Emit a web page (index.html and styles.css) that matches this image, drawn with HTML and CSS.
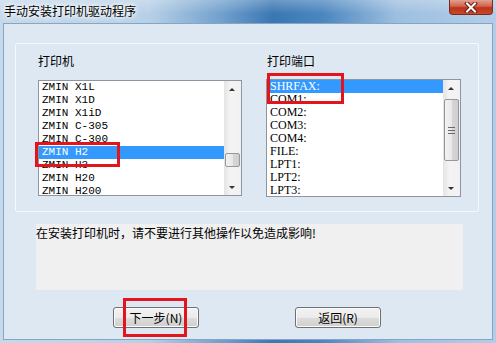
FILE: index.html
```html
<!DOCTYPE html>
<html lang="zh-CN">
<head>
  <meta charset="UTF-8" />
  <title>手动安装打印机驱动程序</title>
  <link rel="stylesheet" href="styles.css">
</head>
<body>
  <div class="window">
    <div class="titlebar">
      <span class="title">手动安装打印机驱动程序</span>
      <div class="close-btn">
        <svg width="14" height="11" viewBox="0 0 14 11">
          <path d="M3 1.5 L11 9.5 M11 1.5 L3 9.5" stroke="#6b1d12" stroke-width="4" stroke-linecap="square" />
          <path d="M3 1.5 L11 9.5 M11 1.5 L3 9.5" stroke="#fff" stroke-width="2" stroke-linecap="square" />
        </svg>
      </div>
    </div>

    <div class="client">
      <div class="groupbox">
        <div class="col col-printer">
          <div class="label">打印机</div>
          <div class="listbox">
            <ul class="items mono">
              <li>ZMIN X1L</li>
              <li>ZMIN X1D</li>
              <li>ZMIN X1iD</li>
              <li>ZMIN C-305</li>
              <li>ZMIN C-300</li>
              <li class="selected">ZMIN H2</li>
              <li>ZMIN H3</li>
              <li>ZMIN H20</li>
              <li>ZMIN H200</li>
            </ul>
            <div class="scrollbar">
              <div class="arrow up"></div>
              <div class="track">
                <div class="thumb thumb-small"></div>
              </div>
              <div class="arrow down"></div>
            </div>
          </div>
        </div>

        <div class="col col-port">
          <div class="label">打印端口</div>
          <div class="listbox">
            <ul class="items serif">
              <li class="selected">SHRFAX:</li>
              <li>COM1:</li>
              <li>COM2:</li>
              <li>COM3:</li>
              <li>COM4:</li>
              <li>FILE:</li>
              <li>LPT1:</li>
              <li>LPT2:</li>
              <li>LPT3:</li>
            </ul>
            <div class="scrollbar">
              <div class="arrow up"></div>
              <div class="track">
                <div class="thumb thumb-long">
                  <span class="grip"></span>
                </div>
              </div>
              <div class="arrow down"></div>
            </div>
          </div>
        </div>
      </div>

      <div class="message">在安装打印机时，请不要进行其他操作以免造成影响!</div>

      <div class="buttons">
        <button class="btn">下一步(N)</button>
        <button class="btn">返回(R)</button>
      </div>
    </div>

    <!-- red annotation boxes -->
    <div class="mark mark-printer"></div>
    <div class="mark mark-port"></div>
    <div class="mark mark-next"></div>
  </div>
</body>
</html>
```

FILE: styles.css
```css
body {
  margin: 0;
  padding: 0;
  font-family: "Noto Sans CJK SC", "Liberation Sans", sans-serif;
  font-size: 12px;
  color: #000;
  background: #a9c8e6;
}

.window {
  position: relative;
  width: 496px;
  height: 343px;
  box-sizing: border-box;
  background: linear-gradient(90deg, #c6d9eb 0%, #b8d0e7 30%, #6f9fcd 45%, #3a77b2 55%, #4b86bf 65%, #9dbfe0 80%, #b3cde7 100%);
  overflow: hidden;
}

.titlebar {
  height: 23px;
  display: flex;
  align-items: center;
  justify-content: space-between;
  padding-left: 4px;
  background: linear-gradient(180deg, rgba(255, 255, 255, 0.25) 0%, rgba(255, 255, 255, 0) 60%);
}

.title {
  line-height: 14px;
  font-size: 12px;
  text-shadow: 0 0 4px #fff, 0 0 6px #fff, 0 0 8px rgba(255, 255, 255, 0.8);
  margin-top: -2px;
}

.close-btn {
  align-self: flex-start;
  width: 44px;
  height: 15px;
  margin-right: 3px;
  box-sizing: border-box;
  border: 1px solid #7a2a1e;
  border-top: none;
  border-radius: 0 0 4px 4px;
  background: linear-gradient(180deg, #e3a08f 0%, #d0624b 45%, #bd3219 55%, #c9492c 100%);
  display: flex;
  align-items: center;
  justify-content: center;
}

.client {
  margin: 0 3px;
  height: 317px;
  box-sizing: border-box;
  border: 1px solid #85a5c5;
  background: #dde8f3;
  padding-top: 19px;
}

.groupbox {
  margin-left: 11px;
  width: 464px;
  height: 169px;
  box-sizing: border-box;
  border: 1px solid #f5f9fd;
  border-radius: 2px;
  padding: 10px 0 0 22px;
  display: flex;
  gap: 24px;
}

.label {
  line-height: 14px;
  height: 14px;
  margin-bottom: 12px;
}

.col-port .label {
  margin-bottom: 11px;
  padding-left: 1px;
}

.listbox {
  display: flex;
  height: 116px;
  box-sizing: border-box;
  border: 1px solid #8e959e;
  background: #fff;
  overflow: hidden;
}

.col-printer .listbox {
  width: 204px;
}

.col-port .listbox {
  width: 195px;
  height: 118px;
}

.items {
  list-style: none;
  margin: 0;
  padding: 0;
  flex: 1;
  overflow: hidden;
}

.items li {
  height: 13px;
  line-height: 13px;
  padding-left: 3px;
  white-space: nowrap;
}

.mono {
  font-family: "Liberation Mono", monospace;
  font-size: 11px;
}

.serif {
  font-family: "Liberation Serif", serif;
  font-size: 12px;
}

.items li.selected {
  background: #3399ff;
  color: #fff;
}

.scrollbar {
  width: 17px;
  display: flex;
  flex-direction: column;
  background: linear-gradient(90deg, #e4e4e4 0%, #f4f4f4 40%, #f1f1f1 100%);
}

.arrow {
  height: 17px;
  position: relative;
}

.arrow::after {
  content: "";
  position: absolute;
  left: 5px;
  width: 0;
  height: 0;
  border-left: 3px solid transparent;
  border-right: 3px solid transparent;
}

.arrow.up::after {
  top: 7px;
  border-bottom: 3px solid #333;
}

.arrow.down::after {
  top: 8px;
  border-top: 3px solid #333;
}

.track {
  flex: 1;
  padding: 0 1px;
}

.thumb {
  box-sizing: border-box;
  border: 1px solid #979797;
  border-radius: 2px;
  background: linear-gradient(90deg, #f3f3f3 0%, #e8e8e8 50%, #d6d6d6 55%, #cfcfcf 100%);
  display: flex;
  align-items: center;
  justify-content: center;
}

.thumb-small {
  margin-top: 55px;
  height: 14px;
}

.thumb-long {
  margin-top: 2px;
  height: 62px;
}

.grip {
  width: 7px;
  height: 5px;
  border-top: 1px solid #6a6a6a;
  border-bottom: 1px solid #6a6a6a;
  background: linear-gradient(180deg, transparent 2px, #6a6a6a 2px, #6a6a6a 3px, transparent 3px);
}

.message {
  margin: 12px 0 0 32px;
  width: 427px;
  height: 66px;
  background: #f0f0f0;
  line-height: 16px;
  padding-top: 1px;
  box-sizing: border-box;
}

.buttons {
  display: flex;
  gap: 96px;
  margin: 17px 0 0 109px;
}

.btn {
  width: 86px;
  height: 21px;
  padding: 0;
  font-family: "Noto Sans CJK SC", "Liberation Sans", sans-serif;
  font-size: 12px;
  color: #000;
  border: 1px solid #707070;
  border-radius: 3px;
  background: linear-gradient(180deg, #f2f2f2 0%, #ebebeb 50%, #dddddd 51%, #cfcfcf 100%);
  box-shadow: inset 0 0 0 1px #fbfbfb;
  line-height: 17px;
}

.mark {
  position: absolute;
  box-sizing: border-box;
  border: 3px solid #e3141b;
}

.mark-printer {
  left: 35px;
  top: 142px;
  width: 85px;
  height: 25px;
}

.mark-port {
  left: 267px;
  top: 73px;
  width: 77px;
  height: 31px;
}

.mark-next {
  left: 123px;
  top: 298px;
  width: 64px;
  height: 39px;
}
```
